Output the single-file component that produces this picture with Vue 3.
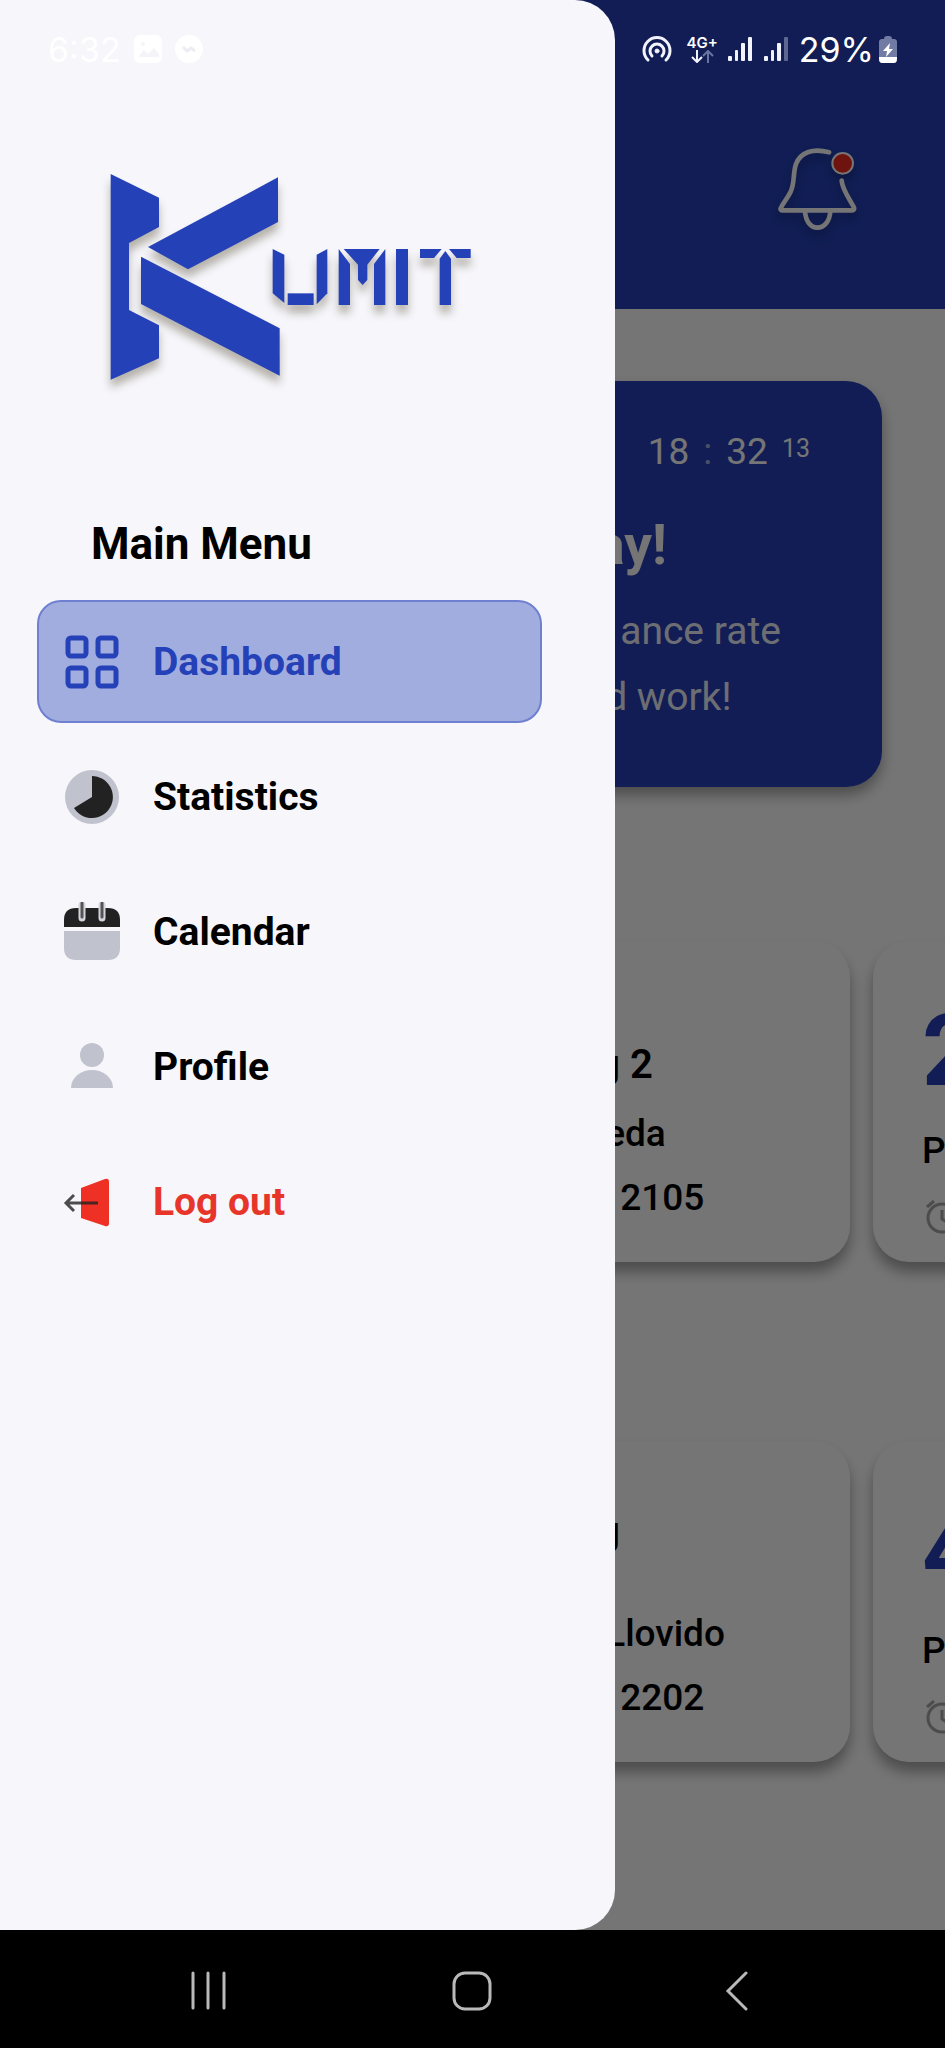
<script setup>
const menu = [
  { id: 'dashboard', label: 'Dashboard', active: true },
  { id: 'statistics', label: 'Statistics' },
  { id: 'calendar', label: 'Calendar' },
  { id: 'profile', label: 'Profile' },
  { id: 'logout', label: 'Log out', danger: true },
]

const classes = [
  { id: 1, title: 'g 2', name: 'eda', room: '2105', next: '2', raised: false },
  { id: 2, title: 'g', name: 'Llovido', room: '2202', next: '4', raised: true },
]
</script>

<template>
  <div class="phone">
    <div class="screen">
      <main class="dashboard">
        <header class="top">
          <button class="bell" type="button" aria-label="Notifications">
            <svg viewBox="504 417 300 300" fill="none" stroke="#fff" stroke-width="14" stroke-linecap="round" stroke-linejoin="round">
              <path d="M687 457C640 444 602 456 588 492C578 521 585 550 571 577C562 595 549 609 542 625Q540 631 548 631H756Q764 631 762 623C752 602 727 570 725 542" />
              <path d="M615 634C617 664 632 683 652 683C673 683 689 664 691 634" />
              <circle cx="728" cy="490" r="31" fill="#f02a1d" stroke-width="6" />
            </svg>
          </button>
        </header>

        <section class="banner">
          <p class="time"><span>18</span><span class="colon">:</span><span>32</span><span class="secs">13</span></p>
          <h1>ay!</h1>
          <p class="note far">ance rate</p>
          <p class="note near">d work!</p>
        </section>

        <section v-for="c in classes" :key="c.id" class="row" :class="{ raised: c.raised }">
          <article class="card wide">
            <h2>{{ c.title }}</h2>
            <p class="near">{{ c.name }}</p>
            <p class="far">{{ c.room }}</p>
          </article>
          <article class="card next">
            <strong>{{ c.next }}</strong>
            <p>P</p>
            <svg class="alarm" viewBox="0 0 36 36" fill="none" stroke="#a6a6a6" stroke-width="3">
              <circle cx="18" cy="18" r="14" />
              <path d="M18 10v9l6 4M3 7l7-6M33 7l-7-6" />
            </svg>
          </article>
        </section>
      </main>

      <div class="scrim"></div>

      <aside class="drawer">
        <svg class="logo" viewBox="0 0 1200 750" role="img" aria-label="Kumit">
          <g fill="#2541b8">
            <path d="M62 72L207 143V231L117 279V480L207 526V625L62 689Z" />
            <path d="M174 291L564 82V216L294 358Z" />
            <path d="M153 320L569 535V677L153 462Z" />
            <path d="M548 297L583 314V459L548 430Z" />
            <path d="M593 430H671V465H593Z" />
            <path d="M680 314L712 297V430L680 463Z" />
            <path d="M746 297L780 342V465H746Z" />
            <path d="M761 297H869L832 344V390L818 405L804 390V344Z" />
            <path d="M886 297V465H852V342Z" />
            <path d="M918 297H954V465H918Z" />
            <path d="M990 297H1055L1032 324H990Z" />
            <path d="M1077 297H1142V324H1100Z" />
            <path d="M1066 303L1083 326V465H1049V326Z" />
          </g>
        </svg>
        <h2 class="menu-title">Main Menu</h2>
        <nav class="menu">
          <button
            v-for="m in menu"
            :key="m.id"
            type="button"
            class="item"
            :class="{ active: m.active, danger: m.danger }"
          >
            <svg v-if="m.id === 'dashboard'" viewBox="0 0 60 60" fill="none" stroke="#2541b8" stroke-width="5">
              <rect x="6" y="6" width="18" height="18" rx="3" />
              <rect x="36" y="6" width="18" height="18" rx="3" />
              <rect x="6" y="36" width="18" height="18" rx="3" />
              <rect x="36" y="36" width="18" height="18" rx="3" />
            </svg>
            <svg v-else-if="m.id === 'statistics'" viewBox="0 0 60 60">
              <circle cx="30" cy="30" r="27" fill="#c0c2cd" />
              <path d="M30 9A21 21 0 1 1 12 41L30 30Z" fill="#222" />
            </svg>
            <svg v-else-if="m.id === 'calendar'" viewBox="0 0 60 60">
              <path d="M2 25V18Q2 6 14 6H46Q58 6 58 18V25Z" fill="#222" />
              <path d="M2 29H58V46Q58 58 46 58H14Q2 58 2 46Z" fill="#c0c2cd" />
              <path d="M20 3V16M40 3V16" stroke="#d4d5dc" stroke-width="7" stroke-linecap="round" />
              <path d="M20 1V15M40 1V15" stroke="#555" stroke-width="3" stroke-linecap="round" />
            </svg>
            <svg v-else-if="m.id === 'profile'" viewBox="0 0 60 60" fill="#c0c2cd">
              <circle cx="30" cy="18" r="12" />
              <path d="M9 51A21 18 0 0 1 51 51Z" />
            </svg>
            <svg v-else viewBox="0 0 60 60">
              <path d="M19 16L43 7Q47 6 47 10V51Q47 55 43 54L19 46Z" fill="#ee3124" />
              <path d="M36 31H4M12 23L4 31L12 39" fill="none" stroke="#222" stroke-opacity=".8" stroke-width="3" />
            </svg>
            <span>{{ m.label }}</span>
          </button>
        </nav>
      </aside>

      <div class="status">
        <div class="left">
          <span>6:32</span>
          <svg class="tile" viewBox="0 0 28 28">
            <rect width="28" height="28" rx="6" fill="#fff" />
            <path d="M4 22L10 15L14 19L20 13L25 19V22Z" fill="#f4f4f9" />
            <circle cx="9" cy="9" r="2" fill="#f4f4f9" />
          </svg>
          <svg class="tile" viewBox="0 0 28 28">
            <circle cx="14" cy="14" r="14" fill="#fff" />
            <path d="M8 12L12 16L16 13L20 16" fill="none" stroke="#ececf2" stroke-width="3" />
          </svg>
        </div>
        <div class="right">
          <svg class="hotspot" viewBox="0 0 30 28" fill="none" stroke="#f2f3fc" stroke-width="3" stroke-linecap="round">
            <path d="M6 25A13 13 0 1 1 24 25M10 21A7 7 0 1 1 20 21" />
            <circle cx="15" cy="16" r="2" fill="#f2f3fc" stroke-width="1" />
          </svg>
          <span class="net">
            <span>4G+</span>
            <svg viewBox="0 0 24 13" fill="none" stroke-width="2">
              <path d="M7 0V11M2 7L7 12L12 7" stroke="#f2f3fc" />
              <path d="M18 13V2M13 6L18 1L23 6" stroke="#6a74a0" />
            </svg>
          </span>
          <svg class="bars" viewBox="0 0 26 26" fill="#f2f3fc">
            <rect x="1" y="20" width="4" height="5" rx="1" /><rect x="8" y="14" width="3" height="11" rx="1" />
            <rect x="14" y="7" width="4" height="18" rx="1" /><rect x="21" y="1" width="4" height="24" rx="1" />
          </svg>
          <svg class="bars" viewBox="0 0 26 26" fill="#f2f3fc">
            <rect x="1" y="20" width="4" height="5" rx="1" /><rect x="8" y="14" width="3" height="11" rx="1" />
            <rect x="14" y="7" width="4" height="18" rx="1" /><rect x="21" y="1" width="4" height="24" rx="1" fill="#5d678f" />
          </svg>
          <span class="pct">29%</span>
          <svg class="battery" viewBox="0 0 18 27">
            <path d="M5 3Q5 0 8 0H10Q13 0 13 3H15Q18 3 18 6V21H0V6Q0 3 3 3Z" fill="#727ba3" />
            <path d="M0 21H18V23Q18 27 15 27H3Q0 27 0 23Z" fill="#fff" />
            <path d="M11 7L4 15H8L7 21L14 13H10Z" fill="#fff" />
          </svg>
        </div>
      </div>
    </div>

    <nav class="system">
      <button type="button" aria-label="Recent apps">
        <svg viewBox="0 0 40 40"><path d="M5 2V37M20 2V37M36 2V37" /></svg>
      </button>
      <button type="button" aria-label="Home">
        <svg viewBox="0 0 40 40"><rect x="2" y="2" width="36" height="36" rx="11" /></svg>
      </button>
      <button type="button" aria-label="Back">
        <svg viewBox="0 0 40 40"><path d="M29 2L11 20L29 38" /></svg>
      </button>
    </nav>
  </div>
</template>

<style>
body {
  margin: 0;
  background: #000;
}
</style>

<style scoped>
.phone {
  --blue: #2541b8;
  --drawer: 65.1vw;
  display: flex;
  flex-direction: column;
  min-height: 100vh;
  font-family: Roboto, "Liberation Sans", sans-serif;
  color: #000;
}
h1, h2, p { margin: 0; }
button {
  font: inherit;
  border: 0;
  background: none;
  padding: 0;
  cursor: pointer;
}
svg { display: block; flex: none; }

.screen {
  position: relative;
  flex: 1;
  overflow: hidden;
  background: #fff;
}
.dashboard { padding-bottom: 168px; }
.top {
  display: flex;
  justify-content: flex-end;
  padding: 139px 77px 70px 0;
  background: var(--blue);
}
.bell svg {
  width: 100px;
  height: 100px;
  filter: drop-shadow(0 6px 4px rgba(0, 0, 0, .25));
}
.banner {
  margin: 72px 63px 154px;
  padding: 47px 0 57px calc(var(--drawer) - 83px);
  border-radius: 36px;
  background: var(--blue);
  color: #fff;
  box-shadow: 0 8px 14px rgba(0, 0, 0, .35);
}
.time {
  display: flex;
  justify-content: flex-end;
  padding-right: 72px;
  margin-bottom: 36px;
  font-size: 37px;
  line-height: 48px;
}
.colon {
  padding: 0 14px;
  color: #a5afdf;
}
.secs {
  padding-left: 14px;
  font-size: 25px;
  line-height: 42px;
}
.banner h1 {
  margin-bottom: 20px;
  font-size: 55px;
  font-weight: 700;
  line-height: 66px;
}
.note {
  font-size: 39px;
  line-height: 66px;
  color: #eef0fa;
}
.near { padding-left: 10px; }
.far { padding-left: 25px; }

.row {
  display: flex;
  gap: 23px;
  padding-left: 63px;
}
.row + .row { margin-top: 179px; }
.card {
  box-sizing: border-box;
  display: flex;
  flex-direction: column;
  justify-content: flex-end;
  min-height: 321px;
  border-radius: 36px;
  background: #fff;
  box-shadow: 0 10px 14px rgba(0, 0, 0, .35);
}
.wide {
  flex: 0 0 calc(100% - 95px);
  padding: 0 24px 32px calc(var(--drawer) - 83px);
  font-size: 37px;
  font-weight: 500;
  line-height: 64px;
}
.wide h2 {
  padding-left: 2px;
  margin-bottom: 9px;
  font-size: 40px;
  font-weight: 600;
  line-height: 56px;
}
.raised .wide h2 { margin-bottom: 42px; }
.next {
  flex: 0 0 80%;
  padding: 0 49px 26px;
  font-size: 37px;
  font-weight: 500;
}
.next strong {
  margin-bottom: 26px;
  font-size: 100px;
  font-weight: 700;
  line-height: 100px;
  color: var(--blue);
}
.next p {
  margin-bottom: 25px;
  line-height: 48px;
}
.alarm {
  width: 36px;
  height: 36px;
  margin-left: 2px;
}

.scrim {
  position: absolute;
  inset: 0;
  background: rgba(0, 0, 0, .54);
}
.drawer {
  position: absolute;
  inset: 0 auto 0 0;
  box-sizing: border-box;
  width: var(--drawer);
  padding-top: 150px;
  border-radius: 0 40px 40px 0;
  background: #f6f6fb;
}
.logo {
  width: 400px;
  height: 250px;
  margin-left: 90px;
  filter: drop-shadow(0 8px 4px rgba(60, 50, 20, .35));
}
.menu-title {
  margin: 118px 0 30px 91px;
  font-size: 44px;
  font-weight: 700;
  line-height: 52px;
}
.menu {
  display: flex;
  flex-direction: column;
  gap: 12px;
  padding: 0 73px 0 37px;
}
.item {
  display: flex;
  align-items: center;
  gap: 31px;
  height: 123px;
  padding: 0 23px;
  border: 2px solid transparent;
  border-radius: 24px;
  font-size: 39px;
  font-weight: 700;
  color: #000;
}
.item svg {
  width: 60px;
  height: 60px;
}
.active {
  border-color: #6e80cf;
  background: #a2addf;
  color: var(--blue);
}
.danger { color: #e8352a; }

.status {
  position: absolute;
  inset: 28px 48px auto;
  display: flex;
  align-items: center;
  justify-content: space-between;
  height: 42px;
  font-family: Inter, Roboto, sans-serif;
  font-size: 34px;
  color: #fff;
}
.left, .right {
  display: flex;
  align-items: center;
}
.left { gap: 13px; }
.tile {
  width: 28px;
  height: 28px;
}
.hotspot {
  width: 30px;
  height: 28px;
  margin-right: 14px;
}
.net {
  display: flex;
  flex-direction: column;
  align-items: center;
  margin-right: 9px;
  font-size: 15px;
  font-weight: 600;
  line-height: 15px;
}
.net svg {
  width: 24px;
  height: 13px;
}
.bars {
  width: 26px;
  height: 26px;
  margin-right: 10px;
}
.pct { margin-right: 5px; }
.battery {
  width: 18px;
  height: 27px;
}

.system {
  box-sizing: border-box;
  display: grid;
  grid-template-columns: repeat(3, 1fr);
  align-items: center;
  height: 118px;
  padding: 4px 8% 0;
  background: #000;
}
.system button {
  display: flex;
  justify-content: center;
}
.system svg {
  width: 40px;
  height: 40px;
  fill: none;
  stroke: #b9b9b9;
  stroke-width: 3;
  stroke-linecap: round;
}
</style>
